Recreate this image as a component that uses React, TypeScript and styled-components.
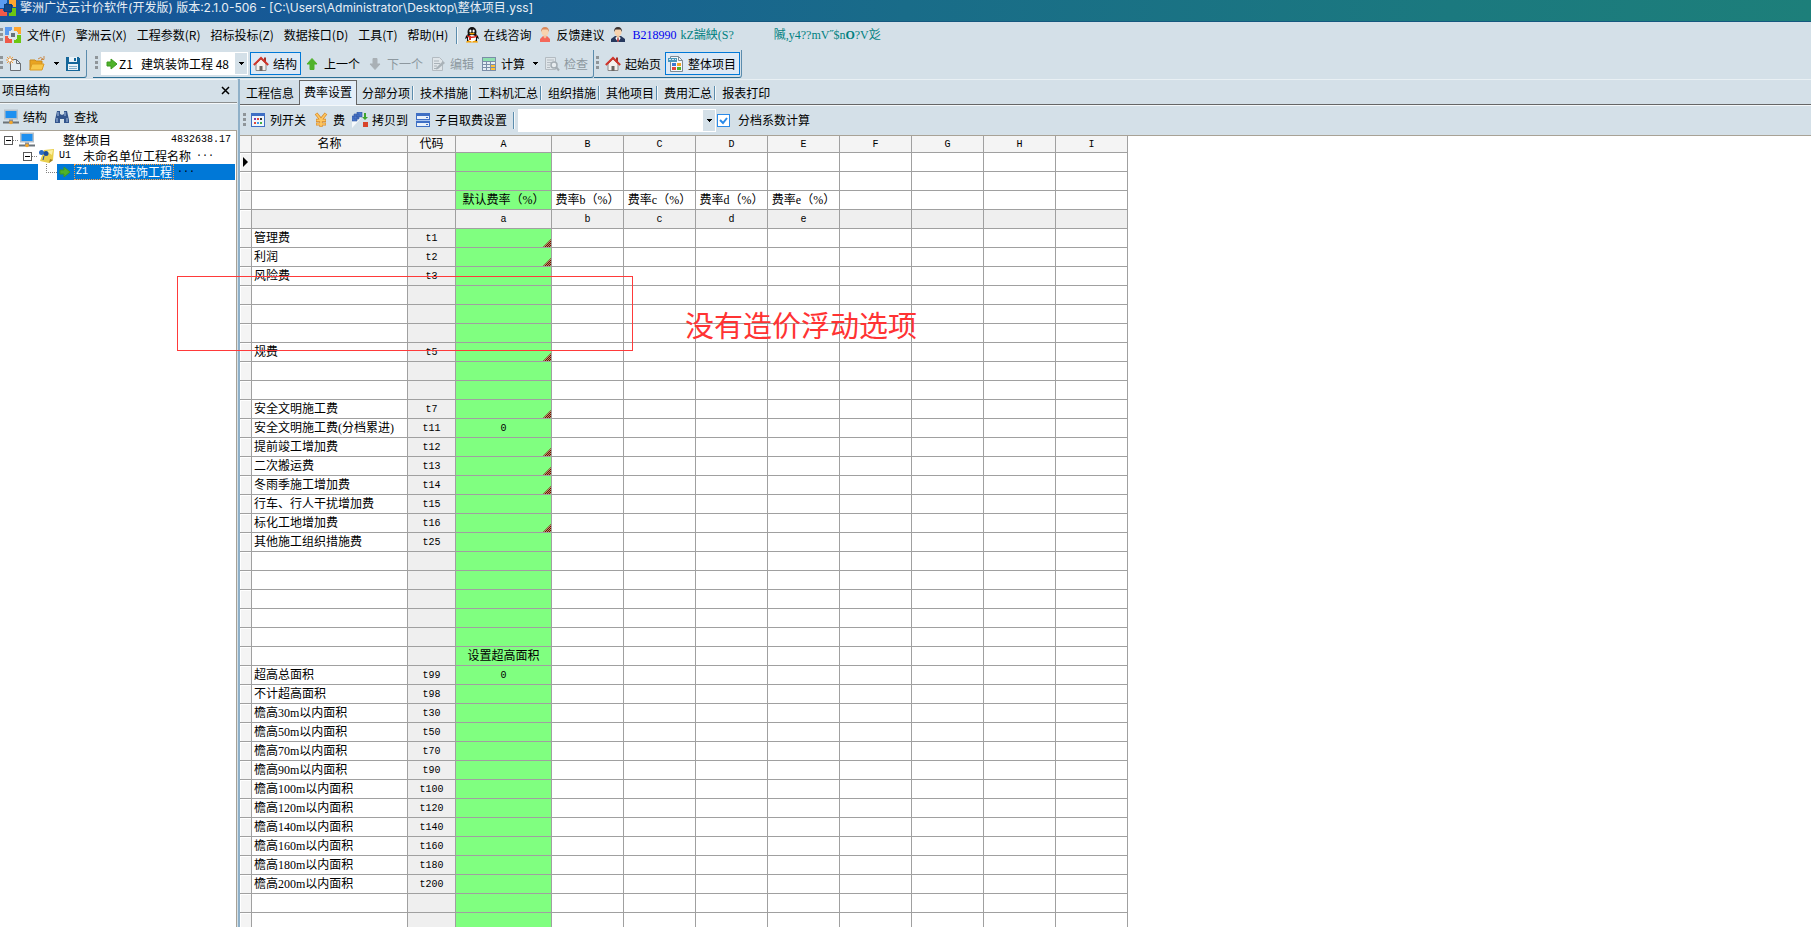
import React from "react";
import styled, { createGlobalStyle, css } from "styled-components";

const UI_FONT = `"Noto Sans CJK SC", sans-serif`;
const GRID_FONT = `"Liberation Serif", "Noto Sans CJK SC", sans-serif`;
const MONO_FONT = `"Liberation Mono", "Noto Sans CJK SC", monospace`;

const GlobalStyle = createGlobalStyle`
  *, *::before, *::after { box-sizing: border-box; }
  html, body { margin: 0; height: 100%; overflow: hidden; background: #fff; }
  body { font: 12px/16px ${UI_FONT}; color: #000; }
  button, select, input { font: inherit; color: inherit; margin: 0; }
  svg { display: block; flex: none; }
`;

const Window = styled.div`
  display: flex;
  flex-direction: column;
  height: 100vh;
  overflow: hidden;
`;

const TitleBar = styled.header`
  display: flex;
  gap: 4px;
  flex: none;
  height: 22px;
  overflow: hidden;
  color: #e8eef5;
  background: linear-gradient(90deg, #15539a 0%, #185f92 28%, #196c89 50%, #1b797f 80%, #1d7f7a 100%);
  border-bottom: 1px solid #14587f;
`;

const Title = styled.h1`
  margin: 0;
  font: 12px/15px Inter, ${UI_FONT};
  white-space: pre;
`;

const MenuBar = styled.nav`
  display: flex;
  align-items: center;
  flex: none;
  height: 28px;
  background: #d4e0e8;
  padding-bottom: 2px;
`;

const Grip = styled.i`
  flex: none;
  width: 3px;
  height: 15px;
  background: repeating-linear-gradient(180deg, #8f9599 0 3px, transparent 3px 5px);
`;

const MenuButton = styled.button`
  border: 0;
  background: none;
  padding: 0 5px;
  white-space: nowrap;
`;

const MenuLogo = styled.div`
  padding: 0 1px 0 2px;
`;

const Divider = styled.i`
  flex: none;
  width: 2px;
  height: 17px;
  margin: 0 4px 0 3px;
  background: #5b8cad;
  border-right: 1px solid #f4f8fa;
`;

const ContactButton = styled.button`
  display: flex;
  align-items: center;
  gap: 3px;
  border: 0;
  background: none;
  padding: 0 2px;
  margin-right: 2px;
  white-space: nowrap;
`;

const Account = styled.span`
  color: #0000f0;
  font: 12px/16px ${GRID_FONT};
  margin-left: 3px;
`;

const License = styled.span<{ $gap: number }>`
  color: #008080;
  font: 12px/16px ${GRID_FONT};
  margin-left: ${(p) => p.$gap}px;
  white-space: nowrap;
`;

const ToolArea = styled.div`
  display: flex;
  flex: none;
  height: 29px;
  background: #d4e0e8;
`;

const ToolGroup = styled.div<{ $first?: boolean }>`
  display: flex;
  align-items: center;
  height: 28px;
  padding: 0 1px 0 ${(p) => (p.$first ? 0 : 2)}px;
  margin-right: ${(p) => (p.$first ? 6 : 0)}px;
  border-right: 1px solid #5b8cad;
  border-bottom: 1px solid #2a6d93;
  border-bottom-right-radius: 3px;
  & > ${Grip} { margin-right: ${(p) => (p.$first ? 0 : 3)}px; }
`;

const ToolButton = styled.button<{ $active?: boolean }>`
  display: flex;
  align-items: center;
  gap: 4px;
  height: 23px;
  padding: 0 3px 0 2px;
  border: 1px solid ${(p) => (p.$active ? "#0078d7" : "transparent")};
  background: ${(p) => (p.$active ? "#dde9f5" : "none")};
  white-space: nowrap;
  &:disabled { color: #8d989f; }
`;

const CaretButton = styled.button`
  display: flex;
  align-items: center;
  justify-content: center;
  width: 12px;
  height: 23px;
  padding: 0;
  border: 0;
  background: none;
`;

const Combo = styled.label<{ $wide?: boolean }>`
  display: flex;
  align-items: center;
  height: 23px;
  background: #fff;
  border: 1px solid #fff;
  ${(p) => p.$wide
    ? css`width: 198px; margin-right: 1px;`
    : css`width: 147px; padding-left: 3px; margin-right: 2px;`}
`;

const ComboSelect = styled.select`
  flex: 1;
  min-width: 0;
  height: 21px;
  appearance: none;
  border: 0;
  background: none;
  padding: 0;
  white-space: pre;
  outline: none;
`;

const ComboArrow = styled.span`
  display: flex;
  align-items: center;
  justify-content: center;
  width: 12px;
  height: 21px;
  background: #d4e0e8;
`;

const Body = styled.div`
  position: relative;
  display: flex;
  flex: 1;
  min-height: 0;
`;

const Sidebar = styled.aside`
  display: flex;
  flex-direction: column;
  flex: none;
  width: 240px;
  padding-right: 1px;
  border-right: 2px solid #8fb0c8;
  background: #d4e0e8;
`;

const PanelHead = styled.div`
  display: flex;
  align-items: center;
  justify-content: space-between;
  height: 24px;
  padding: 0 6px 2px 2px;
  border-top: 1px solid #f4f8fa;
  border-bottom: 1px solid #8c8f8f;
`;

const PanelTitle = styled.h2`
  margin: 0;
  font: inherit;
`;

const CloseButton = styled.button`
  border: 0;
  padding: 1px;
  background: none;
`;

const PanelTools = styled.div`
  display: flex;
  align-items: center;
  height: 27px;
  padding-bottom: 1px;
  border-top: 1px solid #f4f8fa;
`;

const Tree = styled.ul`
  flex: 1;
  margin: 0;
  padding: 1px 1px 0 0;
  list-style: none;
  background: #fff;
  border-top: 1px solid #a8a296;
  border-right: 1px solid #a8a296;
`;

const TreeRow = styled.li<{ $indent: number; $selected?: boolean }>`
  display: flex;
  align-items: center;
  height: 16px;
  padding-left: ${(p) => p.$indent}px;
  white-space: pre;
  ${(p) => p.$selected && css`
    color: #fff;
    background: linear-gradient(90deg, #0078d7 0 38px, #fff 38px 57px, #0078d7 57px);
  `}
`;

const Code = styled.span`
  font: 10px/14px ${MONO_FONT};
`;

const NodeText = styled.span<{ $focus?: boolean }>`
  display: flex;
  align-items: center;
  gap: 12px;
  height: 16px;
  margin-left: 2px;
  padding: 0 1px;
  line-height: 14px;
  border: 1px dotted ${(p) => (p.$focus ? "#ff9a3c" : "transparent")};
`;

const Dots = styled(Code)`
  margin-left: 3px;
  color: #000;
`;

const Amount = styled(Code)`
  margin-left: auto;
  padding-right: 4px;
`;

const RootLabel = styled.span`
  margin-left: 28px;
`;

const Main = styled.main`
  display: flex;
  flex-direction: column;
  flex: 1;
  min-width: 0;
  background: #fff;
`;

const TabBar = styled.div`
  display: flex;
  align-items: flex-end;
  flex: none;
  height: 26px;
  padding-left: 1px;
  background: #d4e0e8;
  border-bottom: 1px solid #666;
  border-top: 1px solid #e9f0f4;
`;

const Tab = styled.button<{ $active?: boolean; $rule?: boolean }>`
  display: flex;
  align-items: center;
  height: 22px;
  padding: 0 5px;
  border: 0;
  background: none;
  white-space: nowrap;
  ${(p) => p.$active && css`
    height: 25px;
    margin-bottom: -1px;
    padding: 0 4px 2px;
    border: 1px solid #666;
    border-bottom: 0;
    background: #e4eef8;
  `}
  ${(p) => p.$rule && css`
    padding-right: 1px;
    &::after {
      content: "";
      width: 2px;
      height: 14px;
      margin-left: 2px;
      background: #5b8cad;
      border-right: 1px solid #f4f8fa;
    }
  `}
`;

const RateTools = styled.div`
  display: flex;
  align-items: center;
  flex: none;
  height: 31px;
  padding: 0 0 1px 3px;
  background: #d4e0e8;
  border-top: 1px solid #f4f8fa;
  border-bottom: 1px solid #a8a296;
  & > ${Grip} { margin-right: 1px; }
  & > ${Divider} { margin: 0 3px 0 2px; }
`;

const CheckLabel = styled.label`
  display: flex;
  align-items: center;
  gap: 8px;
`;

const CheckBox = styled.input`
  appearance: none;
  width: 13px;
  height: 13px;
  border: 1px solid #2a8ae8;
  background: #fff url("data:image/svg+xml,%3Csvg xmlns='http://www.w3.org/2000/svg' viewBox='0 0 11 11'%3E%3Cpath d='M2 5l3 3 4-5' fill='none' stroke='%232a8ae8' stroke-width='2'/%3E%3C/svg%3E");
`;

const GridWrap = styled.div`
  flex: 1;
  min-height: 0;
  overflow: hidden;
`;

const Grid = styled.table`
  width: 888px;
  table-layout: fixed;
  border-collapse: separate;
  border-spacing: 0;
  font: 12px/14px ${GRID_FONT};
`;

const HeadCell = styled.th`
  height: 17px;
  padding: 0;
  font-weight: normal;
  line-height: 14px;
  text-align: center;
  background: #f4f4f4;
  border-right: 1px solid #a0a0a0;
  border-bottom: 1px solid #a0a0a0;
`;

type Tone = "plain" | "grey" | "green";
const tones: Record<Tone, string> = { plain: "#fff", grey: "#efefef", green: "#80ff80" };

const Cell = styled.td<{ $tone: Tone; $left?: boolean; $note?: boolean }>`
  position: relative;
  height: 19px;
  padding: ${(p) => (p.$left ? "0 0 0 2px" : "0")};
  line-height: 14px;
  text-align: ${(p) => (p.$left ? "left" : "center")};
  white-space: nowrap;
  vertical-align: middle;
  background: ${(p) => tones[p.$tone]};
  border-right: 1px solid #a0a0a0;
  border-bottom: 1px solid #a0a0a0;
  ${(p) => p.$note && css`
    &::after {
      content: "";
      position: absolute;
      right: 0;
      bottom: 0;
      width: 8px;
      height: 8px;
      clip-path: polygon(100% 0, 100% 100%, 0 100%);
      background: repeating-conic-gradient(#800000 0 25%, #a8a070 0 50%) 0 0 / 2px 2px;
    }
  `}
`;

const RowHead = styled.th`
  padding: 0;
  background: #f4f4f4;
  border-right: 1px solid #a0a0a0;
  border-bottom: 1px solid #a0a0a0;
  box-shadow: inset 1px 1px #fff;
`;

const Highlight = styled.div`
  position: absolute;
  left: 177px;
  top: 197px;
  width: 456px;
  height: 75px;
  border: 1px solid #ff3a3a;
  pointer-events: none;
`;

const Remark = styled.p`
  position: absolute;
  left: 685px;
  top: 225px;
  margin: 0;
  color: #ff3333;
  font: 29px/40px ${UI_FONT};
  white-space: nowrap;
`;

/* ---------- icons ---------- */

const Logo = ({ dark }: { dark?: boolean }) => (
  <svg width="16" height="16" viewBox="0 0 16 16" shapeRendering="crispEdges">
    <path d="M0 0h7v3H6v2H4v3H0z" fill="#5b9bf0" />
    <path d="M9 0h7v7h-3V5h-2V4H9z" fill="#ffa62e" />
    <path d="M0 9h3v2h2v1h2v4H0z" fill="#ee5a4a" />
    <path d="M12 8h4v8H9v-3h2v-2h1z" fill="#6cc712" />
    <path d="M4 4h8v8H4z" fill={dark ? "#0d3d78" : "#dfe8ee"} />
    <path d={dark ? "M5 5h6v6H5z" : "M6 6h4v4H6z"} fill={dark ? "#12498a" : "#66727c"} />
  </svg>
);

const Caret = () => (
  <svg width="5" height="3" viewBox="0 0 5 3" shapeRendering="crispEdges"><path d="M0 0h5v1H0zM1 1h3v1H1zM2 2h1v1H2z" /></svg>
);

const Close = () => (
  <svg width="9" height="9" viewBox="0 0 9 9"><path d="M1 1l7 7M8 1l-7 7" stroke="#000" strokeWidth="1.5" /></svg>
);

const NewFile = () => (
  <svg width="16" height="16" viewBox="0 0 16 16">
    <path d="M4.500 3.500h6l4 4v7h-10z" fill="#e4ecf1" stroke="#6a6f74" />
    <path d="M10.500 3.500v4h4" fill="none" stroke="#6a6f74" />
    <path d="M4 0v8M0 4h8M1 1l6 6M7 1L1 7" stroke="#f09a3a" />
    <circle cx="4" cy="4" r="1.500" fill="#fff" />
  </svg>
);

const Folder = () => (
  <svg width="17" height="16" viewBox="0 0 17 16">
    <path d="M1 14V4h5l1 1h6v3" fill="#e9a420" stroke="#c98a1e" />
    <path d="M3 8h12l-2 6H1z" fill="#f8c84a" stroke="#dc9a22" />
    <path d="M9 3q3-3 5 0M15 0v3.500h-3" fill="none" stroke="#c98a4a" />
  </svg>
);

const Save = () => (
  <svg width="16" height="16" viewBox="0 0 16 16" shapeRendering="crispEdges">
    <path d="M1 1h12l2 2v12H1z" fill="#15679a" />
    <path d="M4 1h8v5H4z" fill="#eaf3f8" /><path d="M9 2h2v3H9z" fill="#15679a" />
    <path d="M3 8h10v6H3z" fill="#eaf3f8" /><path d="M4 10h8v1H4zM4 12h8v1H4z" fill="#7fb0cc" />
  </svg>
);

const ArrowIcon = ({ dir, color }: { dir: "up" | "down"; color: string }) => (
  <svg width="16" height="16" viewBox="0 0 16 16">
    <path
      d={dir === "up" ? "M8 2.500l5 5.500h-3v5.500H6V8H3z" : "M8 13.500L3 8h3V2.500h4V8h3z"}
      fill={color} stroke={color} strokeLinejoin="round"
    />
  </svg>
);

const SmallArrow = () => (
  <svg width="14" height="14" viewBox="0 0 14 14"><path d="M2 5h4V2l6 5-6 5V9H2z" fill="#4fb22a" stroke="#3d9a1e" strokeLinejoin="round" /></svg>
);

const Home = () => (
  <svg width="16" height="16" viewBox="0 0 16 16">
    <path d="M3 8l5-5 5 5v6.500H3z" fill="#f4f1ee" stroke="#8a8a8a" />
    <path d="M6.500 15v-5h3v5z" fill="#6c6663" />
    <path d="M11 1.500h2V6h-2z" fill="#a33128" />
    <path d="M.8 9L8 2l7.200 7" fill="none" stroke="#d0342a" strokeWidth="2" />
  </svg>
);

const EditDoc = () => (
  <svg width="16" height="16" viewBox="0 0 16 16">
    <path d="M2.500 1.500h7l3 3v10h-10z" fill="#dfe5e9" stroke="#b3bbc1" />
    <path d="M4 5h5M4 7.500h6M4 10h3M4 12.500h3" stroke="#a9b2b8" />
    <path d="M6 12l7-7 2 2-7 6-2 .5z" fill="#a9b2b8" />
  </svg>
);

const CheckDoc = () => (
  <svg width="16" height="16" viewBox="0 0 16 16">
    <path d="M1.500 1.500h10v12h-10z" fill="#dfe5e9" stroke="#b3bbc1" />
    <path d="M3 4h7M3 6.500h4M3 9h3M3 11.500h3" stroke="#b3bbc1" />
    <circle cx="10" cy="9" r="3" fill="#e8edf0" stroke="#a4adb3" strokeWidth="1.500" /><path d="M12 11l3 3.500" stroke="#a4adb3" strokeWidth="2" />
  </svg>
);

const Calc = () => (
  <svg width="16" height="16" viewBox="0 0 16 16" shapeRendering="crispEdges">
    <path d="M1 1h14v14H1z" fill="#7b8ea8" />
    <path d="M2 2h12v3H2z" fill="#8fe0b0" />
    <path d="M2 6h3v2H2zM6 6h3v2H6zM10 6h4v2h-4zM2 9h3v2H2zM6 9h3v2H6zM2 12h3v2H2zM6 12h3v2H6z" fill="#e6edf5" />
    <path d="M10 9h4v2h-4zM10 12h4v2h-4z" fill="#ffc13a" />
  </svg>
);

const Report = () => (
  <svg width="16" height="16" viewBox="0 0 16 16">
    <path d="M2.500.5h8l4 4v11h-12z" fill="#f4f8fb" stroke="#7b8a96" />
    <path d="M10.500.5v4h4" fill="none" stroke="#7b8a96" />
    <path d="M0 2h9v4H0z" fill="#4a97b8" /><path d="M1 3.500h7" stroke="#d5ebf4" strokeDasharray="2 1" />
    <path d="M4 7h4v3H4z" fill="#3b78d0" /><path d="M9 7h4v3H9z" fill="#f5a623" />
    <path d="M4 11h4v3H4z" fill="#e2483c" /><path d="M9 11h4v3H9z" fill="#4fb22a" />
  </svg>
);

const Computer = () => (
  <svg width="16" height="16" viewBox="0 0 16 16">
    <path d="M1 .5h14v10H1z" fill="#b9c1c8" /><path d="M2.500 2h11v7h-11z" fill="#1e90f0" />
    <path d="M6 10.500h4V13H6z" fill="#8a9299" /><path d="M0 13.500h16" stroke="#6b7379" strokeWidth="2" />
    <circle cx="8" cy="13.500" r="1.800" fill="#f2a52c" />
  </svg>
);

const Binoculars = () => (
  <svg width="16" height="16" viewBox="0 0 16 16">
    <path d="M3 2h3v3l2 1 2-1V2h3l2 9v3h-5v-4H6v4H1v-3z" fill="#32548c" />
    <path d="M4 3v4M11 3v4M3 9v4M13 9v4" stroke="#a9c1e4" strokeWidth="1" />
  </svg>
);

const NoteIcon = () => (
  <svg width="17" height="16" viewBox="0 0 17 16">
    <path d="M6 2l10-1-1 11-4 3-9-2z" fill="#e9cf4c" /><path d="M11 15l1-4 3 1z" fill="#a3801f" /><path d="M8 3l7-1-1 5z" fill="#fbf0a0" />
    <circle cx="3.500" cy="4.500" r="2.500" fill="#2b6cc4" /><circle cx="8" cy="5.500" r="2.500" fill="#1d4e9a" /><path d="M6 8l-1 4" stroke="#1d4e9a" />
  </svg>
);

const Minus = () => (
  <svg width="9" height="9" viewBox="0 0 9 9" shapeRendering="crispEdges"><path d="M.5.500h8v8h-8z" fill="#fff" stroke="#5a5a5a" /><path d="M2 4h5v1H2z" /></svg>
);

const Lead = ({ width }: { width: number }) => (
  <svg width={width} height="16" viewBox={`0 0 ${width} 16`} shapeRendering="crispEdges"><path d={`M0 8.500h${width}`} stroke="#808080" strokeDasharray="1 1" /></svg>
);

const Elbow = () => (
  <svg width="12" height="16" viewBox="0 0 12 16" shapeRendering="crispEdges"><path d="M.5 0v8.500h11" fill="none" stroke="#808080" strokeDasharray="1 1" /></svg>
);

const ColumnsIcon = () => (
  <svg width="16" height="16" viewBox="0 0 16 16" shapeRendering="crispEdges">
    <path d="M1 1h14v14H1z" fill="#3f6fc4" /><path d="M2 4h12v10H2z" fill="#f2f6fb" />
    <path d="M4 6h2v2H4z" fill="#7a3fb0" /><path d="M7 6h2v2H7zM4 10h2v2H4z" fill="#e0453a" /><path d="M10 6h2v2h-2z" fill="#333" /><path d="M7 10h2v2H7z" fill="#3d9be8" /><path d="M10 10h2v2h-2z" fill="#3fae4a" />
  </svg>
);

const Yuan = () => (
  <svg width="16" height="16" viewBox="-1 0 16 16">
    <path d="M2 1.500l5 6 5-6M7 7v8M2 8.300h10M2 12h10" fill="none" stroke="#d48a2c" strokeWidth="3.200" />
    <path d="M2.300 1.800l4.700 6 4.700-6M7 7v7.500M2.500 8.300h9M2.500 12h9" fill="none" stroke="#ffc862" strokeWidth="1.700" />
  </svg>
);

const CopyTo = () => (
  <svg width="16" height="16" viewBox="0 0 16 16">
    <path d="M0 16V5l10 0z" fill="#f6f9fb" />
    <path d="M0 4h5v5H0zM2 2h5v5H2zM5 0h5v5H5z" fill="#4b78cc" stroke="#2f569f" strokeWidth=".6" />
    <path d="M12 1h2v4h2l-3 3-3-3h2z" fill="#3da52c" /><path d="M11 10h5v5h-5z" fill="#d8432a" />
  </svg>
);

const Rows = () => (
  <svg width="16" height="16" viewBox="-1 0 16 16" shapeRendering="crispEdges">
    <path d="M0 1h14v14H0z" fill="#3f6fc4" /><path d="M1 4h12v3H1zM1 11h12v3H1z" fill="#e9f1fa" /><path d="M0 8h14v1H0z" fill="#a9c4ee" /><path d="M10 5h2v1h-2zM10 12h2v1h-2z" fill="#3f6fc4" />
  </svg>
);

const Penguin = () => (
  <svg width="16" height="16" viewBox="0 0 16 16">
    <path d="M1 12q0-3 3-5h8q3 2 3 5l-2-1v3H3v-3z" fill="#111" />
    <ellipse cx="8" cy="5" rx="4.500" ry="5" fill="#111" /><ellipse cx="8" cy="11.500" rx="4" ry="3.500" fill="#fff" />
    <ellipse cx="6.400" cy="4" rx="1.100" ry="1.500" fill="#fff" /><ellipse cx="9.600" cy="4" rx="1.100" ry="1.500" fill="#fff" />
    <path d="M5 6.500q3 2 6 0-3-1.500-6 0z" fill="#f5a000" /><path d="M3 8q5 3 10 0v1.500q-5 3-10 0zM5 9h2v4H5z" fill="#e0281e" />
    <path d="M2.500 15q2-2 5 0zM8.500 15q3-2 5 0z" fill="#f5a000" stroke="#f5a000" />
  </svg>
);

const Person = ({ suit }: { suit?: boolean }) => (
  <svg width="16" height="16" viewBox="0 0 16 16">
    <path d={suit ? "M1 15v-3l4-3h6l4 3v3z" : "M3 15v-3l3-3h4l3 3v3z"} fill={suit ? "#26395e" : "#f4685a"} />
    <path d="M6.500 7h3v3L8 11.500 6.500 10z" fill="#f3c59c" />
    <circle cx="8" cy="5" r="3.600" fill="#f8d3ae" />
    <path d="M4 5q0-5 4-5t4 5l-1.500-2.500h-5z" fill={suit ? "#3b3230" : "#d9885a"} />
    {suit && <path d="M6 9.500l2 2 2-2 .5 2L8 15l-2.500-3.500z" fill="#fff" />}
    {suit && <path d="M7.500 11h1l.5 3-1 1-1-1z" fill="#b03030" />}
  </svg>
);

const Pointer = () => (
  <svg width="10" height="10" viewBox="0 0 10 10"><path d="M3 0l5 5-5 5z" /></svg>
);

/* ---------- data ---------- */

const menus = ["文件(F)", "擎洲云(X)", "工程参数(R)", "招标投标(Z)", "数据接口(D)", "工具(T)", "帮助(H)"];
const tabs = ["工程信息", "费率设置", "分部分项", "技术措施", "工料机汇总", "组织措施", "其他项目", "费用汇总", "报表打印"];
const letters = ["B", "C", "D", "E", "F", "G", "H", "I"];
const rateNames = ["b", "c", "d", "e"];

interface Row {
  name?: string;
  code?: string;
  value?: string;
  note?: boolean;
  kind?: "rates" | "keys";
}

const blanks = (n: number): Row[] => Array.from({ length: n }, () => ({}));
const item = (name: string, code: string, note = false, value?: string): Row => ({ name, code, note, value });

const rows: Row[] = [
  ...blanks(2),
  { kind: "rates", value: "默认费率（%）" },
  { kind: "keys", value: "a" },
  item("管理费", "t1", true),
  item("利润", "t2", true),
  item("风险费", "t3"),
  ...blanks(3),
  item("规费", "t5", true),
  ...blanks(2),
  item("安全文明施工费", "t7", true),
  item("安全文明施工费(分档累进)", "t11", false, "0"),
  item("提前竣工增加费", "t12", true),
  item("二次搬运费", "t13", true),
  item("冬雨季施工增加费", "t14", true),
  item("行车、行人干扰增加费", "t15"),
  item("标化工地增加费", "t16", true),
  item("其他施工组织措施费", "t25"),
  ...blanks(5),
  { value: "设置超高面积" },
  item("超高总面积", "t99", false, "0"),
  item("不计超高面积", "t98"),
  ...[30, 50, 70, 90, 100, 120, 140, 160, 180, 200].map((h) => item(`檐高${h}m以内面积`, `t${h}`)),
  ...blanks(3),
];

const RateGrid = () => (
  <Grid>
    <colgroup>
      <col width="12" /><col width="156" /><col width="48" /><col width="96" />
      {letters.map((l) => <col key={l} width="72" />)}
    </colgroup>
    <thead>
      <tr>
        <HeadCell />
        <HeadCell>名称</HeadCell>
        <HeadCell>代码</HeadCell>
        <HeadCell><Code>A</Code></HeadCell>
        {letters.map((l) => <HeadCell key={l}><Code>{l}</Code></HeadCell>)}
      </tr>
    </thead>
    <tbody>
      {rows.map((row, r) => {
        const keys = row.kind === "keys";
        return (
          <tr key={r}>
            <RowHead>{r === 0 && <Pointer />}</RowHead>
            <Cell $tone={keys ? "grey" : "plain"} $left>{row.name}</Cell>
            <Cell $tone="grey">{row.code && <Code>{row.code}</Code>}</Cell>
            <Cell $tone={keys ? "grey" : "green"} $note={row.note}>
              {row.value && row.value.length === 1 ? <Code>{row.value}</Code> : row.value}
            </Cell>
            {letters.map((l, c) => (
              <Cell key={l} $tone={keys ? "grey" : "plain"}>
                {row.kind === "rates" && rateNames[c] && `费率${rateNames[c]}（%）`}
                {keys && rateNames[c] && <Code>{rateNames[c]}</Code>}
              </Cell>
            ))}
          </tr>
        );
      })}
    </tbody>
  </Grid>
);

export default function App() {
  return (
    <Window>
      <GlobalStyle />
      <TitleBar>
        <Logo dark />
        <Title>擎洲广达云计价软件(开发版) 版本:2.1.0-506 - [C:\Users\Administrator\Desktop\整体项目.yss]</Title>
      </TitleBar>

      <MenuBar>
        <Grip />
        <MenuLogo><Logo /></MenuLogo>
        {menus.map((m) => <MenuButton key={m}>{m}</MenuButton>)}
        <Divider />
        <ContactButton><Penguin />在线咨询</ContactButton>
        <ContactButton><Person />反馈建议</ContactButton>
        <ContactButton><Person suit /><Account>B218990</Account></ContactButton>
        <License $gap={0}>kZ諯紻(S?</License>
        <License $gap={40}>隇,y4??mV˝$n<b>O</b>?V彣</License>
      </MenuBar>

      <ToolArea>
        <ToolGroup $first>
          <Grip />
          <ToolButton aria-label="新建"><NewFile /></ToolButton>
          <ToolButton aria-label="打开"><Folder /></ToolButton>
          <CaretButton aria-label="最近文件"><Caret /></CaretButton>
          <ToolButton aria-label="保存"><Save /></ToolButton>
        </ToolGroup>
        <ToolGroup>
          <Grip />
          <Combo>
            <SmallArrow />
            <ComboSelect aria-label="当前工程" defaultValue="z1">
              <option value="z1">{"Z1\u00a0\u00a0\u00a0建筑装饰工程 48"}</option>
            </ComboSelect>
            <ComboArrow><Caret /></ComboArrow>
          </Combo>
          <ToolButton $active><Home />结构</ToolButton>
          <ToolButton><ArrowIcon dir="up" color="#4fb22a" />上一个</ToolButton>
          <ToolButton disabled><ArrowIcon dir="down" color="#a9b0b5" />下一个</ToolButton>
          <ToolButton disabled><EditDoc />编辑</ToolButton>
          <ToolButton><Calc />计算</ToolButton>
          <CaretButton aria-label="计算选项"><Caret /></CaretButton>
          <ToolButton disabled><CheckDoc />检查</ToolButton>
        </ToolGroup>
        <ToolGroup>
          <Grip />
          <ToolButton><Home />起始页</ToolButton>
          <ToolButton $active><Report />整体项目</ToolButton>
        </ToolGroup>
      </ToolArea>

      <Body>
        <Sidebar>
          <PanelHead>
            <PanelTitle>项目结构</PanelTitle>
            <CloseButton aria-label="关闭"><Close /></CloseButton>
          </PanelHead>
          <PanelTools>
            <ToolButton><Computer />结构</ToolButton>
            <ToolButton><Binoculars />查找</ToolButton>
          </PanelTools>
          <Tree>
            <TreeRow $indent={4}>
              <Minus /><Lead width={6} /><Computer />
              <RootLabel>整体项目</RootLabel>
              <Amount>4832638.17</Amount>
            </TreeRow>
            <TreeRow $indent={23}>
              <Minus /><Lead width={6} /><NoteIcon />
              <NodeText><Code>U1</Code>未命名单位工程名称</NodeText>
              <Dots>···</Dots>
            </TreeRow>
            <TreeRow $indent={46} $selected>
              <Elbow /><SmallArrow />
              <NodeText $focus><Code>Z1</Code>建筑装饰工程</NodeText>
              <Dots>···</Dots>
            </TreeRow>
          </Tree>
        </Sidebar>

        <Main>
          <TabBar>
            {tabs.map((t, i) => (
              <Tab key={t} $active={i === 1} $rule={i > 1 && i < tabs.length - 1}>{t}</Tab>
            ))}
          </TabBar>
          <RateTools>
            <Grip />
            <ToolButton><ColumnsIcon />列开关</ToolButton>
            <ToolButton><Yuan />费</ToolButton>
            <ToolButton><CopyTo />拷贝到</ToolButton>
            <ToolButton><Rows />子目取费设置</ToolButton>
            <Divider />
            <Combo $wide>
              <ComboSelect aria-label="费率模板" />
              <ComboArrow><Caret /></ComboArrow>
            </Combo>
            <CheckLabel><CheckBox type="checkbox" defaultChecked />分档系数计算</CheckLabel>
          </RateTools>
          <GridWrap><RateGrid /></GridWrap>
        </Main>

        <Highlight />
        <Remark>没有造价浮动选项</Remark>
      </Body>
    </Window>
  );
}
